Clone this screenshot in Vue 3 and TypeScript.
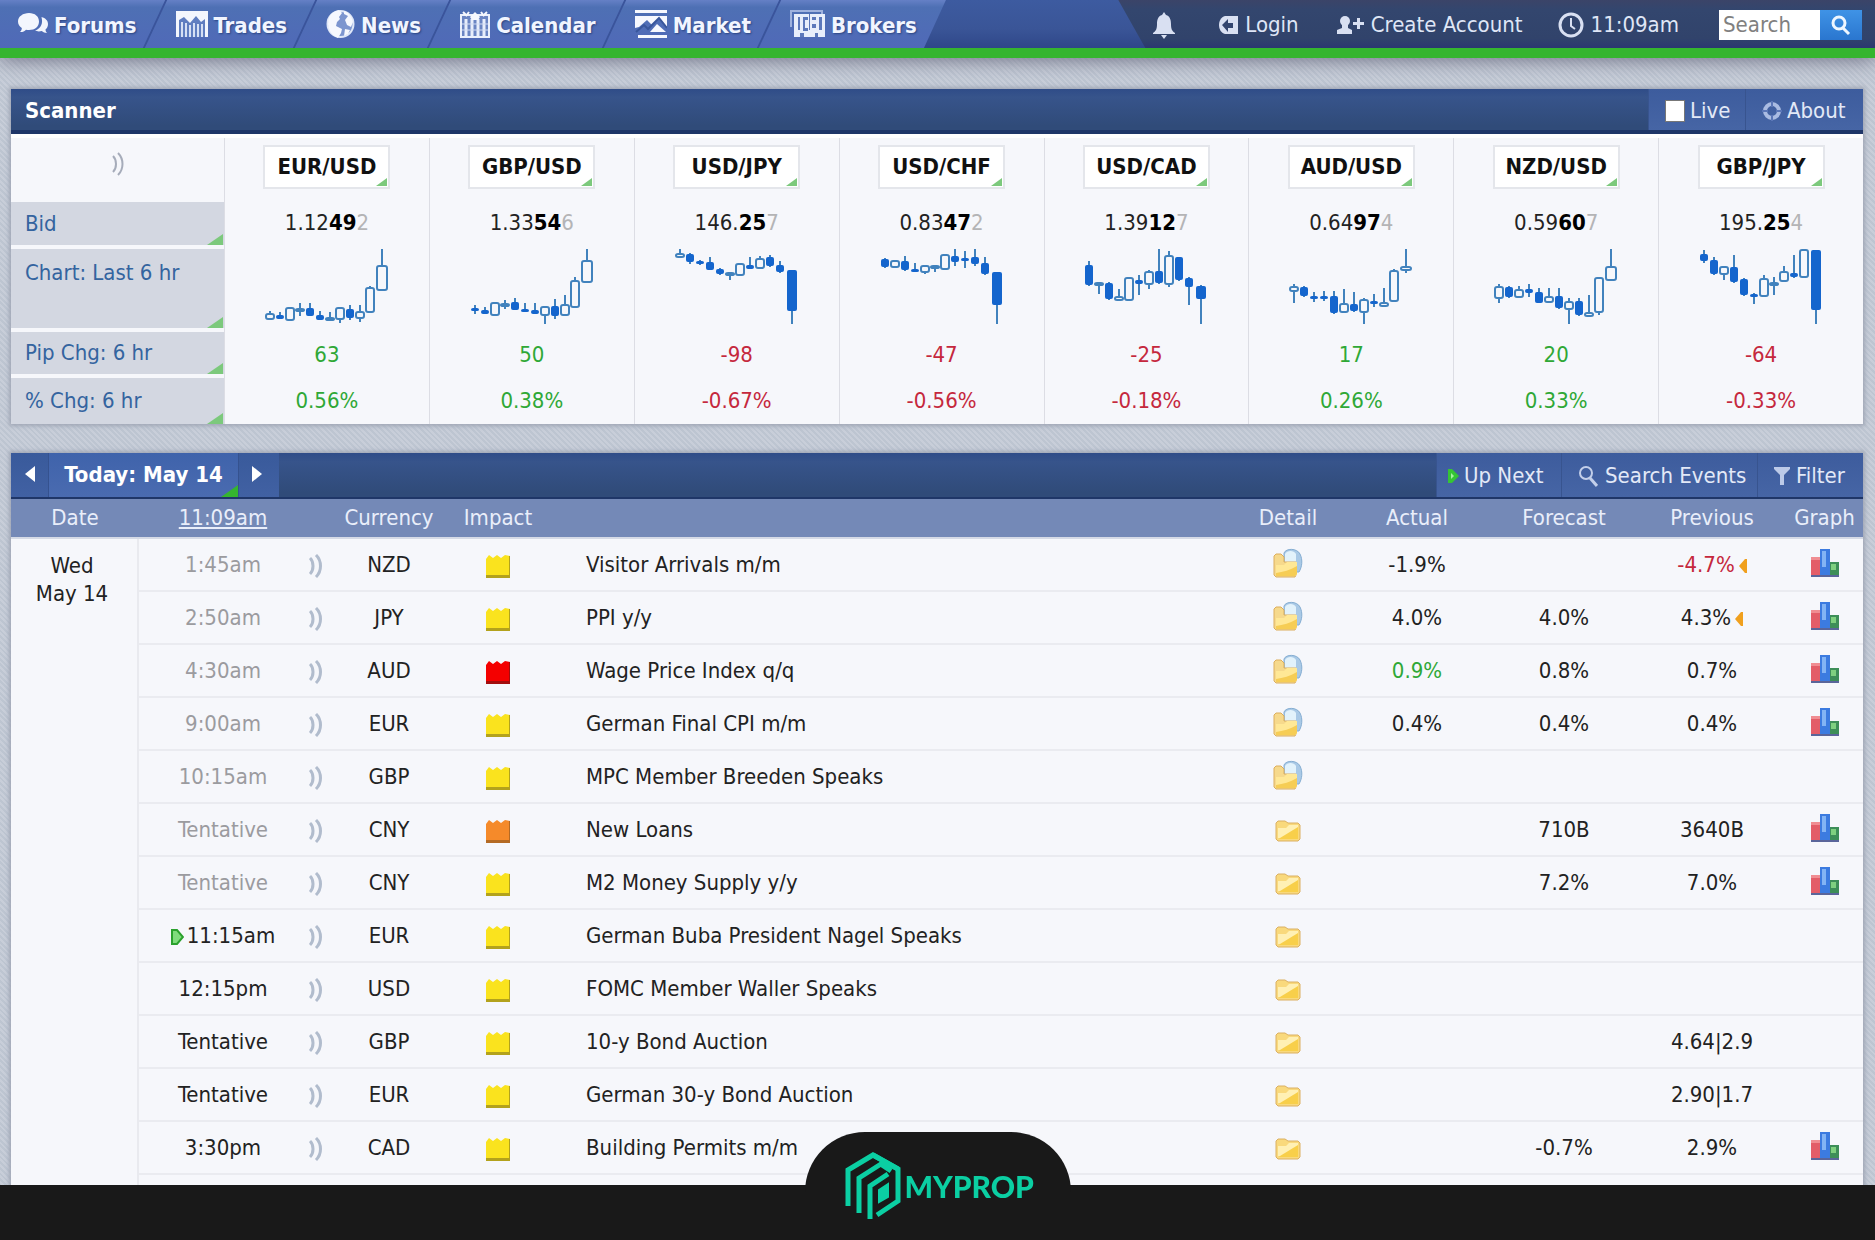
<script setup lang="ts">
import { ref } from 'vue'

type Candle = [high: number, top: number, bottom: number, low: number, filled: 0 | 1]

interface Pair {
  name: string
  bid: [string, string, string]
  pips: string
  change: string
  up: boolean
  candles: Candle[]
}

interface CalendarEvent {
  time: string
  past?: boolean
  next?: boolean
  currency: string
  impact: 'low' | 'medium' | 'high'
  title: string
  open?: boolean
  actual?: string
  actualTone?: string
  forecast?: string
  previous?: string
  previousTone?: string
  revised?: boolean
  graph?: boolean
}

const tabs = ['Forums', 'Trades', 'News', 'Calendar', 'Market', 'Brokers']
const live = ref(false)
const query = ref('')

const pairs: Pair[] = [
  { name: 'EUR/USD', bid: ['1.12', '49', '2'], pips: '63', change: '0.56%', up: true,
    candles: [[62,65,70,70,0],[63,66,70,70,1],[59,59,71,71,0],[54,60,62,67,0],[54,59,67,67,1],[62,66,71,71,1],[63,69,71,71,0],[58,59,70,74,0],[56,60,69,71,1],[56,63,69,73,0],[37,39,63,64,0],[0,17,41,41,0]] },
  { name: 'GBP/USD', bid: ['1.33', '54', '6'], pips: '50', change: '0.38%', up: true,
    candles: [[56,59,62,65,1],[58,61,65,65,1],[54,54,66,66,0],[51,55,57,60,0],[49,53,61,61,1],[54,60,63,63,1],[54,61,65,65,1],[57,58,66,75,0],[50,57,67,70,1],[46,56,66,67,0],[28,32,58,59,0],[0,12,33,33,0]] },
  { name: 'USD/JPY', bid: ['146.', '25', '7'], pips: '-98', change: '-0.67%', up: false,
    candles: [[0,5,8,9,0],[4,5,13,15,1],[11,12,15,16,1],[8,13,21,21,1],[19,20,25,26,1],[23,24,26,31,0],[15,15,26,26,0],[8,16,20,20,1],[7,10,19,19,0],[6,8,17,18,1],[12,16,23,24,1],[21,21,62,75,1]] },
  { name: 'USD/CHF', bid: ['0.83', '47', '2'], pips: '-47', change: '-0.56%', up: false,
    candles: [[9,10,18,19,1],[12,12,18,18,0],[7,12,21,22,1],[14,20,23,23,1],[16,17,23,25,0],[16,17,19,23,0],[6,6,20,20,0],[0,7,13,17,1],[2,9,12,19,1],[0,8,15,17,1],[8,14,25,26,1],[23,23,56,75,1]] },
  { name: 'USD/CAD', bid: ['1.39', '12', '7'], pips: '-25', change: '-0.18%', up: false,
    candles: [[12,16,36,37,1],[33,34,36,45,0],[33,34,50,51,1],[40,48,51,52,0],[28,29,51,52,0],[26,31,35,46,1],[21,23,35,40,0],[0,22,34,35,1],[2,7,35,38,0],[8,8,31,32,1],[28,29,38,56,1],[36,37,50,75,1]] },
  { name: 'AUD/USD', bid: ['0.64', '97', '4'], pips: '17', change: '0.26%', up: true,
    candles: [[35,38,42,54,0],[37,38,47,48,1],[43,47,50,53,1],[42,47,50,52,1],[42,47,64,65,1],[40,55,63,64,0],[43,55,62,63,1],[49,51,63,75,0],[45,52,55,58,1],[39,54,57,57,0],[20,22,52,53,0],[0,18,21,24,0]] },
  { name: 'NZD/USD', bid: ['0.59', '60', '7'], pips: '20', change: '0.33%', up: true,
    candles: [[35,38,49,54,0],[37,38,48,49,1],[37,41,48,49,0],[35,40,44,48,1],[39,43,54,54,1],[39,48,53,54,0],[39,47,59,60,1],[49,53,60,75,0],[49,52,66,67,1],[46,64,67,67,0],[28,29,63,66,0],[0,18,31,31,0]] },
  { name: 'GBP/JPY', bid: ['195.', '25', '4'], pips: '-64', change: '-0.33%', up: false,
    candles: [[1,5,12,14,1],[8,11,25,26,1],[17,18,25,31,0],[6,18,33,34,1],[29,30,46,47,1],[44,45,48,55,1],[26,30,47,48,0],[28,34,36,46,0],[17,23,32,33,0],[6,24,28,29,1],[0,1,28,29,0],[1,1,61,75,1]] },
]

const events: CalendarEvent[] = [
  { time: '1:45am', past: true, currency: 'NZD', impact: 'low', title: 'Visitor Arrivals m/m', open: true, actual: '-1.9%', previous: '-4.7%', previousTone: 'worse', revised: true, graph: true },
  { time: '2:50am', past: true, currency: 'JPY', impact: 'low', title: 'PPI y/y', open: true, actual: '4.0%', forecast: '4.0%', previous: '4.3%', revised: true, graph: true },
  { time: '4:30am', past: true, currency: 'AUD', impact: 'high', title: 'Wage Price Index q/q', open: true, actual: '0.9%', actualTone: 'better', forecast: '0.8%', previous: '0.7%', graph: true },
  { time: '9:00am', past: true, currency: 'EUR', impact: 'low', title: 'German Final CPI m/m', open: true, actual: '0.4%', forecast: '0.4%', previous: '0.4%', graph: true },
  { time: '10:15am', past: true, currency: 'GBP', impact: 'low', title: 'MPC Member Breeden Speaks', open: true },
  { time: 'Tentative', past: true, currency: 'CNY', impact: 'medium', title: 'New Loans', forecast: '710B', previous: '3640B', graph: true },
  { time: 'Tentative', past: true, currency: 'CNY', impact: 'low', title: 'M2 Money Supply y/y', forecast: '7.2%', previous: '7.0%', graph: true },
  { time: '11:15am', next: true, currency: 'EUR', impact: 'low', title: 'German Buba President Nagel Speaks' },
  { time: '12:15pm', currency: 'USD', impact: 'low', title: 'FOMC Member Waller Speaks' },
  { time: 'Tentative', currency: 'GBP', impact: 'low', title: '10-y Bond Auction', previous: '4.64|2.9' },
  { time: 'Tentative', currency: 'EUR', impact: 'low', title: 'German 30-y Bond Auction', previous: '2.90|1.7' },
  { time: '3:30pm', currency: 'CAD', impact: 'low', title: 'Building Permits m/m', forecast: '-0.7%', previous: '2.9%', graph: true },
]

const candleX = (i: number) => 6 + i * 10 + (i === 11 ? 2 : 0)
const candleHalf = (i: number) => (i === 11 ? 5 : 4)
</script>

<template>
  <div class="page">
    <header class="topbar">
      <nav class="tabs">
        <a v-for="tab in tabs" :key="tab" href="#" class="tab">
          <svg v-if="tab === 'Forums'" width="30" height="28" viewBox="0 0 30 28" fill="#f3f6fd">
            <path d="M11 3c6 0 10 3.500 10 8.500s-4 8.500-10 8.500c-1 0-2 0-3-.3-1.500 1.500-3.500 2.500-6 2.300 1-1 2-2.500 1.800-4C1.500 16.500 0 14.500 0 11.500 0 6.500 5 3 11 3z" />
            <path d="M23.500 7c4 1.200 6.500 3.500 6.500 7 0 2.500-1 4.200-2.500 5.500 0 1.500.7 2.500 1.500 3.500-2 0-4-.8-5.200-2-2.300.6-5 .5-6.800-.4 4.500-1.600 7.500-5.300 7-10.600z" />
          </svg>
          <svg v-else-if="tab === 'Trades'" width="32" height="28" viewBox="0 0 32 28">
            <path d="M0 1h32v26H0z" fill="#5f7dc0" />
            <path d="M0 1h32v26h-3V9l-4 3-5-6-6 7-6-6-5 3v17H0z" fill="#f3f6fd" />
            <path d="M6 12v15M10 13v14M14 15v12M18 13v14M22 14v13M26 14v13" stroke="#d5dff4" stroke-width="2" />
          </svg>
          <svg v-else-if="tab === 'News'" width="29" height="32" viewBox="0 0 29 32">
            <circle cx="14.500" cy="16" r="13" fill="#7c95cf" stroke="#dfe7f8" stroke-width="2" />
            <path d="M3 10C5 5 9 3 13 2l3 3-3 4 1 2-3 3-1 4 6 3-1 4-3 5C4 27 0 18 3 10z" fill="#f6f8fe" />
            <path d="M18 3c5 2 8 6 9 11l-2 5-4-2-2-5 3-4-4-2zM19 21l5 1-2 4-4 2z" fill="#f6f8fe" />
          </svg>
          <svg v-else-if="tab === 'Calendar'" width="30" height="28" viewBox="0 0 30 28" fill="none">
            <path d="M1 5h28v22H1z" fill="#6a85c3" stroke="#eaf0fc" stroke-width="2" />
            <path d="M6 9v17M12 9v17M18 9v17M24 9v17" stroke="#e8eefb" stroke-width="3" />
            <path d="M2 14h26M2 20h26" stroke="#cfdaf2" stroke-width="1" />
            <path d="M3 2l4 4M9 2l-3 4M21 2l3 4M27 2l-4 4" stroke="#f6f8fe" stroke-width="2" />
            <path d="M10 7l5-5 5 5-2 3h-6z" fill="#f6f8fe" />
          </svg>
          <svg v-else-if="tab === 'Market'" width="32" height="28" viewBox="0 0 32 28" fill="#f6f8fe">
            <path d="M0 0h32v3H0zM0 6h32v11l-8-9-7 7-5-5-8 7-4 1zM22 14l9 8H15zM3 25h29v3H3z" />
            <path d="M1 22l8-7 4 4 11-11 8 10" fill="none" stroke="#38569b" stroke-width="2" />
          </svg>
          <svg v-else width="35" height="28" viewBox="0 0 35 28">
            <path d="M1 17V1h31v4" fill="none" stroke="#9fb2de" stroke-width="2" />
            <path d="M4 4h31v23H4z" fill="#e8eefb" />
            <path d="M8 7h2v13H8zM13 7h5v3h-3v8h3v3h-5zM22 7h4v3h-4zM22 14h4v4h-4zM29 7h3v13h-3zM10 23h4v4h-4zM25 23h3v4h-3zM19 4h1v16h-1z" fill="#5c78bb" />
          </svg>
          <span>{{ tab }}</span>
        </a>
      </nav>

      <div class="account">
        <a href="#" class="bell" aria-label="Alerts">
          <svg width="22" height="27" viewBox="0 0 22 27" fill="#d9e0f2">
            <path d="M11 0l2 3c4 1 5 5 5 9 0 5 1 7 4 9v1H0v-1c3-2 4-4 4-9 0-4 1-8 5-9zM8 23h6l-3 4z" />
          </svg>
        </a>
        <a href="#" class="login">
          <svg width="20" height="20" viewBox="0 0 20 20">
            <path d="M7 1h13v18H7C-1 17-1 3 7 1z" fill="#d9e0f2" />
            <path d="M4 10l6-6v4h5v5h-5v4z" fill="#33456f" />
          </svg>
          <span>Login</span>
        </a>
        <a href="#" class="create">
          <svg width="27" height="20" viewBox="0 0 27 20" fill="#d9e0f2">
            <circle cx="8" cy="6" r="5" />
            <path d="M5 10h6v3l4 2v4H0v-4l5-2zM20 3h3v4h4v3h-4v4h-3v-4h-4V7h4z" />
          </svg>
          <span>Create Account</span>
        </a>
        <a href="#" class="clock">
          <svg width="26" height="28" viewBox="0 0 26 28" fill="none" stroke="#d9e0f2">
            <circle cx="13" cy="14" r="11" stroke-width="3" />
            <path d="M13 7v8l4 3" stroke-width="2" />
          </svg>
          <span>11:09am</span>
        </a>
        <form class="search" @submit.prevent>
          <input v-model="query" type="text" placeholder="Search" aria-label="Search" />
          <button type="submit" aria-label="Go">
            <svg width="20" height="22" viewBox="0 0 20 22" fill="none" stroke="#eef6ff">
              <circle cx="8" cy="9" r="6" stroke-width="3" />
              <path d="M12 14l6 6" stroke-width="3" />
            </svg>
          </button>
        </form>
      </div>
    </header>

    <main class="content">
      <section class="panel">
        <div class="bar">
          <h2>Scanner</h2>
          <div class="tools">
            <label class="tool live"><input v-model="live" type="checkbox" /><span>Live</span></label>
            <a href="#" class="tool about">
              <svg width="20" height="20" viewBox="0 0 20 20" fill="none">
                <circle cx="10" cy="10" r="7" stroke="#a9bbe2" stroke-width="4" />
                <path d="M10 0v6M10 14v6M0 10h6M14 10h6" stroke="#5b77b8" stroke-width="2" />
              </svg>
              <span>About</span>
            </a>
          </div>
        </div>
        <table class="scanner">
          <tbody>
            <tr class="r-name">
              <th class="corner" aria-label="Sound">
                <svg width="14" height="24" viewBox="0 0 14 24" fill="none" stroke="#a6acba" stroke-width="2">
                  <path d="M2 4c4 4 4 12 0 16M7 1c6 6 6 16 0 22" />
                </svg>
              </th>
              <td v-for="p in pairs" :key="p.name"><button type="button" class="pair">{{ p.name }}</button></td>
            </tr>
            <tr class="r-bid">
              <th class="label">Bid</th>
              <td v-for="p in pairs" :key="p.name">{{ p.bid[0] }}<b>{{ p.bid[1] }}</b><i>{{ p.bid[2] }}</i></td>
            </tr>
            <tr class="r-chart">
              <th class="label">Chart: Last 6 hr</th>
              <td v-for="p in pairs" :key="p.name">
                <svg class="chart" width="126" height="76" viewBox="0 0 126 76">
                  <g v-for="(c, i) in p.candles" :key="i">
                    <path :d="`M${candleX(i)} ${c[0]}V${c[3]}`" stroke="#4182bd" stroke-width="2" />
                    <rect
                      :x="candleX(i) - candleHalf(i)"
                      :y="c[1]"
                      :width="candleHalf(i) * 2"
                      :height="Math.max(c[2] - c[1], 2)"
                      rx="2"
                      :fill="c[4] ? '#1465cd' : '#f6f7fb'"
                      :stroke="c[4] ? '#1465cd' : '#4182bd'"
                      :stroke-width="c[4] ? 0 : 2"
                    />
                  </g>
                </svg>
              </td>
            </tr>
            <tr class="r-pips">
              <th class="label">Pip Chg: 6 hr</th>
              <td v-for="p in pairs" :key="p.name" :class="p.up ? 'better' : 'worse'">{{ p.pips }}</td>
            </tr>
            <tr class="r-pct">
              <th class="label">% Chg: 6 hr</th>
              <td v-for="p in pairs" :key="p.name" :class="p.up ? 'better' : 'worse'">{{ p.change }}</td>
            </tr>
          </tbody>
        </table>
      </section>

      <section class="panel">
        <div class="bar events-bar">
          <button type="button" class="step" aria-label="Previous day">
            <svg width="10" height="16" viewBox="0 0 10 16"><path d="M10 0v16L0 8z" fill="#fff" /></svg>
          </button>
          <button type="button" class="today">Today: May 14</button>
          <button type="button" class="step next" aria-label="Next day">
            <svg width="10" height="16" viewBox="0 0 10 16"><path d="M0 0v16l10-8z" fill="#fff" /></svg>
          </button>
          <div class="tools">
            <a href="#" class="tool upnext">
              <svg width="11" height="14" viewBox="0 0 11 14"><path d="M0 0h4l7 7-7 7H0z" fill="#35c435" /><path d="M3 4l3 3-3 3z" fill="#a5f0a0" /></svg>
              <span>Up Next</span>
            </a>
            <a href="#" class="tool find">
              <svg width="20" height="22" viewBox="0 0 20 22" fill="none" stroke="#c3cfea">
                <circle cx="8" cy="8" r="6" stroke-width="2" />
                <path d="M12 13l7 8" stroke-width="3" />
              </svg>
              <span>Search Events</span>
            </a>
            <a href="#" class="tool filter">
              <svg width="16" height="18" viewBox="0 0 16 18"><path d="M0 0h16v2l-6 6v10H6V8L0 2z" fill="#bccae8" /></svg>
              <span>Filter</span>
            </a>
          </div>
        </div>
        <table class="events">
          <colgroup>
            <col class="c-date" /><col class="c-time" /><col class="c-sound" /><col class="c-cur" /><col class="c-impact" />
            <col /><col class="c-detail" /><col class="c-actual" /><col class="c-fore" /><col class="c-fore" /><col class="c-graph" />
          </colgroup>
          <thead>
            <tr>
              <th>Date</th>
              <th><a href="#">11:09am</a></th>
              <th></th>
              <th>Currency</th>
              <th>Impact</th>
              <th></th>
              <th>Detail</th>
              <th>Actual</th>
              <th>Forecast</th>
              <th>Previous</th>
              <th>Graph</th>
            </tr>
          </thead>
          <tbody>
            <tr v-for="(e, i) in events" :key="i">
              <td v-if="i === 0" :rowspan="events.length + 1" class="day">Wed<br />May 14</td>
              <td :class="{ past: e.past }">
                <svg v-if="e.next" class="marker" width="13" height="16" viewBox="0 0 13 16">
                  <path d="M1 1h5l6 7-6 7H1z" fill="#7fdc7c" stroke="#2aa12d" stroke-width="2" />
                </svg>{{ e.time }}
              </td>
              <td class="sound">
                <svg width="14" height="24" viewBox="0 0 14 24" fill="none" stroke="#b1bccd" stroke-width="3">
                  <path d="M1 4c4 4 4 12 0 16M7 1c6 6 6 16 0 22" />
                </svg>
              </td>
              <td>{{ e.currency }}</td>
              <td>
                <svg class="impact" :class="e.impact" width="26" height="24" viewBox="0 0 26 24">
                  <path class="face" d="M1 5l3-4 4 3 4-3 4 3 4-3 5 1v21H1z" />
                  <path class="edge" d="M1 21h23V2h1v22H1z" />
                </svg>
              </td>
              <td class="title">{{ e.title }}</td>
              <td>
                <svg v-if="e.open" class="opened" width="30" height="30" viewBox="0 0 30 30">
                  <path d="M11 16V5c2-5 13-5 16 1 3 6 2 13-1 18h-4z" fill="#a9c9e6" stroke="#86aed2" />
                  <path d="M12 16V6c2-4 9-4 11 0v16z" fill="#e2f2fb" />
                  <path d="M1 27V8l2-2h5l3 3v5h12v13l-1 2H3z" fill="#f6d98c" stroke="#dcae5c" />
                  <path d="M3 17h8l3-3h10v12l-2 2H3z" fill="#ffe896" />
                  <path d="M3 25c7-1 14-3 21-7v8l-2 2H3z" fill="#f6cd55" />
                </svg>
                <svg v-else width="26" height="22" viewBox="0 0 26 22">
                  <path d="M1 19V3l2-2h7l3 2h10l2 2v14l-2 2H3z" fill="#f9d97c" stroke="#dbb062" />
                  <path d="M3 8h8l3-3h9v13H3z" fill="#fff0b4" />
                  <path d="M5 18l18-11v12H4z" fill="#f8cf4a" />
                </svg>
              </td>
              <td :class="e.actualTone">{{ e.actual }}</td>
              <td>{{ e.forecast }}</td>
              <td :class="e.previousTone">
                {{ e.previous }}<svg v-if="e.revised" class="revised" width="8" height="14" viewBox="0 0 8 14"><path d="M8 0v14H6L0 7l6-7z" fill="#f0a01e" /></svg>
              </td>
              <td>
                <svg v-if="e.graph" class="graph" width="30" height="28" viewBox="0 0 30 28">
                  <path d="M1 8h9v19H1z" fill="#e35d68" /><path d="M1 8h9v3H1z" fill="#f08d92" />
                  <path d="M19 13h10v14H19z" fill="#3d8e58" /><path d="M21 15h5v6h-5z" fill="#7fd07f" />
                  <path d="M10 0h10v27H10z" fill="#3c7be0" /><path d="M12 2h4v16h-4z" fill="#83b4f4" />
                  <path d="M1 26h28v2H1z" fill="#5a659a" />
                </svg>
              </td>
            </tr>
            <tr><td colspan="10"></td></tr>
          </tbody>
        </table>
      </section>
    </main>

    <footer class="brand">
      <div class="badge">
        <svg width="56" height="68" viewBox="0 0 56 68" fill="none" stroke="#0bcfa3" stroke-width="5">
          <path d="M3 54V18L28 3l25 14v32L32 63" />
          <path d="M14 61V26l22-14" />
          <path d="M25 67V34l18-12v0" />
          <path d="M28 3l25 14M34 11l12 8" />
          <path d="M34 50V38l9-6v13z" fill="#0bcfa3" stroke-width="2" />
        </svg>
        <span>MYPROP</span>
      </div>
    </footer>
  </div>
</template>

<style>
body {
  margin: 0;
  overflow: hidden;
}
</style>

<style scoped>
.page {
  height: 100vh;
  overflow: hidden;
  font-family: "DejaVu Sans Condensed", "Noto Sans", sans-serif;
  font-size: 22px;
  line-height: 28px;
  color: #222;
  background: repeating-linear-gradient(45deg, #c8ced9 0 2px, #bdc5d1 2px 4px);
}
a {
  color: inherit;
  text-decoration: none;
}
button {
  font: inherit;
  border: 0;
  padding: 0;
  cursor: pointer;
}
svg {
  flex: none;
}

.topbar {
  position: relative;
  display: flex;
  justify-content: space-between;
  height: 48px;
  background: linear-gradient(#3d5ba0, #3a5597 60%, #2f4789);
  border-bottom: 10px solid #35b52f;
  box-shadow: 0 2px 20px #6f7085;
}
.tabs {
  display: flex;
  padding-right: 11px;
  background: linear-gradient(#6580c6, #4e70b4 15%, #5069b8);
  clip-path: polygon(0 0, 100% 0, calc(100% - 22px) 100%, 0 100%);
}
.tab {
  position: relative;
  display: flex;
  align-items: center;
  gap: 6px;
  padding: 0 18px 0 21px;
  font-weight: bold;
  color: #f1f5ff;
  text-shadow: 1px 1px 2px #2a4482;
}
.tab span {
  padding-top: 3px;
}
.tab:first-child {
  padding-left: 18px;
}
.tab:not(:last-child)::after {
  content: "";
  position: absolute;
  top: 0;
  right: -1px;
  width: 2px;
  height: 48px;
  background: #3a549b;
  transform: skewX(-25deg);
}
.account {
  display: flex;
  align-items: center;
  padding: 2px 13px 0 35px;
  color: #dfe6f6;
  background: linear-gradient(#3b4468, #33466e 20%, #31436b 80%, #2b3771);
  clip-path: polygon(0 0, 100% 0, 100% 100%, 27px 100%);
}
.account a {
  display: flex;
  align-items: center;
  gap: 7px;
}
.login {
  margin-left: 43px;
}
.create {
  margin-left: 38px;
}
.clock {
  margin-left: 35px;
}
.search {
  display: flex;
  margin-left: 40px;
  height: 30px;
}
.search input {
  box-sizing: border-box;
  width: 101px;
  padding: 0 4px;
  border: 0;
  border-radius: 0;
  font: inherit;
  background: #fff;
}
.search input::placeholder {
  color: #808080;
  opacity: 1;
}
.search button {
  display: flex;
  align-items: center;
  justify-content: center;
  width: 42px;
  background: linear-gradient(#3f93e6, #2a76cf);
}

.content {
  padding: 31px 12px 0 11px;
}
.panel {
  margin-bottom: 29px;
  background: #f6f7fb;
  box-shadow: 0 0 4px 2px #a0a7b6;
}
.bar {
  box-sizing: border-box;
  display: flex;
  height: 45px;
  color: #fff;
  background: linear-gradient(#2f4c88, #37548b 20%, #304b79 90%);
  border-bottom: 4px solid #1f3668;
}
.bar h2 {
  margin: 0;
  padding-left: 14px;
  font-size: 22px;
  line-height: 44px;
}
.tools {
  display: flex;
  margin-left: auto;
}
.tool {
  box-sizing: border-box;
  display: flex;
  align-items: center;
  gap: 7px;
  padding: 2px 0 0 16px;
  color: #e3e9f7;
  background: linear-gradient(#3d5c9d, #4665a5);
  border-left: 1px solid #38548f;
}
.live {
  width: 97px;
  gap: 5px;
}
.live input {
  appearance: none;
  width: 20px;
  height: 22px;
  margin: 0;
  background: #fff;
  border: 1px solid #777;
}
.live input:checked {
  background: #35b52f;
}
.about {
  width: 118px;
  gap: 5px;
}

table {
  width: 100%;
  border-spacing: 0;
  table-layout: fixed;
}
th,
td {
  padding: 0;
  font-weight: normal;
  text-align: center;
}
.scanner {
  border-top: 4px solid #fff;
}
.scanner th {
  width: 213px;
}
.scanner td {
  border-left: 1px solid #dcdde4;
}
.r-name {
  height: 64px;
}
.r-name td,
.r-name th {
  padding-bottom: 6px;
}
.r-bid {
  height: 47px;
}
.r-bid td {
  padding-bottom: 6px;
}
.r-chart {
  height: 83px;
}
.r-pips,
.r-pct {
  height: 46px;
}
.pair {
  position: relative;
  width: 127px;
  height: 44px;
  font-weight: bold;
  color: #111;
  background: #fff;
  border: 2px solid #e4e6eb;
}
.pair::after,
.label::after,
.today::after {
  content: "";
  position: absolute;
  right: 1px;
  bottom: 1px;
  border-style: solid;
  border-width: 0 0 8px 11px;
  border-color: transparent transparent #7cc97c;
}
.label {
  position: relative;
  box-sizing: border-box;
  padding: 0 0 0 14px;
  text-align: left;
  color: #34649f;
  background: #d3d7e1;
  border-bottom: 4px solid #f6f7fb;
}
.r-chart .label {
  padding-top: 10px;
  vertical-align: top;
}
.r-pct .label {
  border-bottom: 0;
}
.label::after {
  bottom: 0;
  border-width: 0 0 11px 16px;
}
.r-bid b {
  color: #000;
}
.r-bid i {
  font-style: normal;
  color: #b4b4b6;
}
.r-chart td {
  vertical-align: top;
}
.chart {
  display: block;
  margin: 0 auto;
}
.better {
  color: #2fa836;
}
.worse {
  color: #c5283d;
}

.events-bar {
  height: 46px;
  border-bottom-width: 2px;
}
.step {
  width: 38px;
  background: linear-gradient(#395a9b, #4161a3);
  border-right: 1px solid #35528f;
}
.step.next {
  width: 41px;
  padding-right: 5px;
  border: 0;
  border-left: 1px solid #35528f;
}
.today {
  position: relative;
  width: 189px;
  font-weight: bold;
  color: #fff;
  background: linear-gradient(#3f63ab, #4a6bb0);
}
.today::after {
  right: 0;
  bottom: 0;
  border-width: 0 0 12px 17px;
  border-bottom-color: #35b52f;
}
.upnext {
  width: 125px;
  gap: 5px;
  padding-left: 11px;
}
.find {
  width: 196px;
}
.filter {
  width: 106px;
  gap: 6px;
}
.c-date {
  width: 128px;
}
.c-time {
  width: 168px;
}
.c-sound {
  width: 18px;
}
.c-cur {
  width: 128px;
}
.c-impact {
  width: 90px;
}
.c-detail {
  width: 112px;
}
.c-actual {
  width: 146px;
}
.c-fore {
  width: 148px;
}
.c-graph {
  width: 77px;
}
.events thead th {
  height: 38px;
  color: #e9eefa;
  background: #7489b7;
  border-bottom: 2px solid #d5dae6;
}
.events thead a {
  text-decoration: underline;
}
.events tbody td {
  box-sizing: border-box;
  height: 53px;
  border-bottom: 2px solid #eaebf0;
}
.events .day {
  height: auto;
  padding-top: 13px;
  padding-right: 4px;
  vertical-align: top;
  border-right: 2px solid #e9eaef;
}
.events .title {
  padding-left: 43px;
  text-align: left;
}
.past {
  color: #9b9b9f;
}
.events td svg {
  vertical-align: middle;
}
.events .marker {
  margin-right: 3px;
}
.revised {
  margin-left: 4px;
}
.opened,
.graph {
  margin-bottom: 4px;
}
.low .face {
  fill: #fae31e;
}
.low .edge {
  fill: #b3a21c;
}
.medium .face {
  fill: #f58a2a;
}
.medium .edge {
  fill: #b46a24;
}
.high .face {
  fill: #f40000;
}
.high .edge {
  fill: #a30d0d;
}

.brand {
  position: fixed;
  inset: auto 0 0;
  display: flex;
  justify-content: center;
  height: 55px;
  background: #191919;
}
.badge {
  box-sizing: border-box;
  display: flex;
  align-items: center;
  gap: 4px;
  width: 266px;
  height: 108px;
  margin-top: -53px;
  padding-left: 40px;
  background: #191919;
  border-radius: 60px 60px 0 0;
  font-family: Lato, sans-serif;
  font-size: 30px;
  font-weight: 900;
  color: #0bcfa3;
}
</style>
